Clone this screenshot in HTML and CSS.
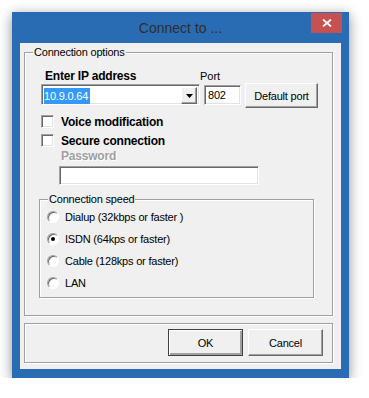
FILE: index.html
```html
<!DOCTYPE html>
<html lang="en">
<head>
    <meta charset="UTF-8">
    <title>Connect to ...</title>
    <link rel="stylesheet" href="styles.css">
</head>
<body>
    <div class="window">
        <div class="titlebar">
            <span class="title">Connect to ...</span>
            <div class="close">
                <svg width="10" height="8" viewBox="0 0 10 8">
                    <path d="M1 0.5 L9 7.5 M9 0.5 L1 7.5" stroke="#fff" stroke-width="1.8" fill="none"/>
                </svg>
            </div>
        </div>
        <div class="client">
            <fieldset class="group options">
                <legend>Connection options</legend>
                <div class="ip-labels">
                    <span class="ip-label">Enter IP address</span>
                    <span class="port-label">Port</span>
                </div>
                <div class="ip-row">
                    <div class="combo">
                        <span class="combo-value"><span class="selected">10.9.0.64</span></span>
                        <span class="combo-arrow">
                            <svg width="7" height="4" viewBox="0 0 7 4"><polygon points="0,0 7,0 3.5,4" fill="#000"/></svg>
                        </span>
                    </div>
                    <div class="field port">802</div>
                    <div class="btn default-port">Default port</div>
                </div>
                <div class="check first"><span class="box"></span>Voice modification</div>
                <div class="check"><span class="box"></span>Secure connection</div>
                <div class="disabled-label">Password</div>
                <div class="field password"></div>
                <fieldset class="group speed">
                    <legend>Connection speed</legend>
                    <div class="radio"><span class="dot"></span>Dialup (32kbps or faster )</div>
                    <div class="radio"><span class="dot checked"></span>ISDN (64kps or faster)</div>
                    <div class="radio"><span class="dot"></span>Cable (128kps or faster)</div>
                    <div class="radio"><span class="dot"></span>LAN</div>
                </fieldset>
            </fieldset>
            <div class="group actions">
                <div class="btn action default">OK</div>
                <div class="btn action">Cancel</div>
            </div>
        </div>
    </div>
</body>
</html>
```

FILE: styles.css
```css
body {
    margin: 0;
    background: #fff;
    font-family: "Liberation Sans", Arial, sans-serif;
    font-size: 11px;
    letter-spacing: -0.2px;
    color: #000;
}
.window {
    position: relative;
    margin: 12px 0 0 12px;
    width: 337px;
    height: 366px;
    box-sizing: border-box;
    padding: 0 8px 9px 8px;
    background: #2a6cb3;
    box-shadow: 0 3px 12px rgba(0, 0, 0, 0.45);
    display: flex;
    flex-direction: column;
}
.titlebar {
    height: 31px;
    display: flex;
    align-items: center;
    justify-content: center;
}
.title {
    font-size: 14px;
    letter-spacing: 0;
    color: #2e2e2e;
    padding-top: 1px;
}
.close {
    position: absolute;
    top: 1px;
    right: 7px;
    width: 31px;
    height: 20px;
    background: #c75050;
    display: flex;
    align-items: center;
    justify-content: center;
}
.client {
    flex: 1;
    background: #f0f0f0;
    padding: 3px 0 0 4px;
}

/* group boxes */
.group {
    border: 1px solid #a0a0a0;
    box-shadow: 1px 1px 0 #fff, inset 1px 1px 0 #fff;
    margin: 0;
    padding: 0;
    box-sizing: border-box;
}
.group legend {
    margin-left: 8px;
    padding: 0 1px;
    line-height: 13px;
    background: #f0f0f0;
}
.options {
    width: 309px;
    height: 270px;
}
.ip-labels {
    display: flex;
    margin-top: 10px;
    padding-left: 20px;
    font-size: 12px;
    line-height: 14px;
}
.ip-label {
    width: 155px;
    font-weight: bold;
}
.port-label {
    letter-spacing: 0;
    font-size: 11px;
}
.ip-row {
    display: flex;
    align-items: flex-start;
    height: 21px;
    margin-top: 1px;
    padding-left: 16px;
}

/* sunken fields */
.combo, .field, .box {
    background: #fff;
    border: 1px solid;
    border-color: #a0a0a0 #fff #fff #a0a0a0;
    box-shadow: inset 1px 1px 0 #696969, inset -1px -1px 0 #e3e3e3;
    box-sizing: border-box;
}
.combo {
    width: 159px;
    height: 21px;
    display: flex;
    padding: 2px 2px 2px 2px;
}
.combo-value {
    flex: 1;
    padding-top: 1px;
    line-height: 15px;
}
.selected {
    display: inline-block;
    background: #3399ff;
    color: #fff;
    padding: 0 2px 0 0;
    height: 16px;
    line-height: 16px;
}
.combo-arrow {
    width: 16px;
    height: 17px;
    background: #f0f0f0;
    border: 1px solid;
    border-color: #fff #696969 #696969 #fff;
    box-shadow: inset -1px -1px 0 #a0a0a0;
    box-sizing: border-box;
    display: flex;
    align-items: center;
    justify-content: center;
}
.port {
    width: 37px;
    height: 20px;
    margin: 1px 0 0 4px;
    padding: 3px 0 0 3px;
    line-height: 13px;
}

/* raised buttons */
.btn {
    background: #f0f0f0;
    border: 1px solid;
    border-color: #fff #696969 #696969 #fff;
    box-shadow: inset -1px -1px 0 #a0a0a0;
    box-sizing: border-box;
    display: flex;
    align-items: center;
    justify-content: center;
}
.default-port {
    width: 73px;
    height: 25px;
    margin: -1px 0 0 4px;
}

.check {
    display: flex;
    align-items: center;
    height: 13px;
    margin-top: 6px;
    padding-left: 16px;
    font-size: 12px;
    font-weight: bold;
}
.check.first {
    margin-top: 10px;
}
.box {
    width: 13px;
    height: 13px;
    margin-right: 7px;
}
.disabled-label {
    margin-top: 2px;
    padding-left: 36px;
    font-size: 12px;
    line-height: 14px;
    font-weight: bold;
    color: #a0a0a0;
    text-shadow: 1px 1px 0 #fff;
}
.password {
    width: 200px;
    height: 19px;
    margin: 3px 0 0 34px;
}

.speed {
    width: 275px;
    height: 105px;
    margin: 8px 0 0 14px;
}
.radio {
    display: flex;
    align-items: center;
    height: 22px;
    padding-left: 7px;
}
.dot {
    width: 12px;
    height: 12px;
    margin-right: 6px;
    border-radius: 50%;
    background: #fff;
    border: 1px solid;
    border-color: #a0a0a0 #fff #fff #a0a0a0;
    box-shadow: inset 1px 1px 0 #696969;
    box-sizing: border-box;
    display: flex;
    align-items: center;
    justify-content: center;
}
.dot.checked::after {
    content: "";
    width: 4px;
    height: 4px;
    border-radius: 50%;
    background: #000;
}

.actions {
    width: 309px;
    height: 40px;
    margin-top: 7px;
    display: flex;
    justify-content: flex-end;
    align-items: flex-start;
    gap: 5px;
    padding: 5px 9px 0 0;
}
.action {
    width: 75px;
    height: 27px;
}
.action.default {
    border-color: #404040;
    box-shadow: inset 1px 1px 0 #fff, inset -2px -2px 0 #a0a0a0;
}
```
